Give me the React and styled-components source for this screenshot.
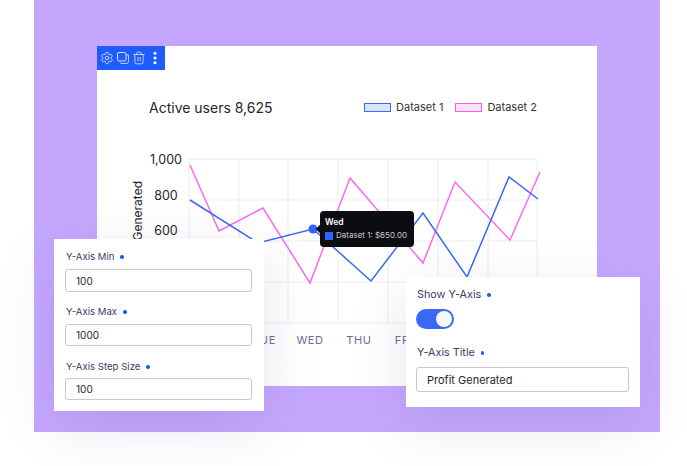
import React from 'react'
import styled, { createGlobalStyle } from 'styled-components'
import { Settings, Trash2, EllipsisVertical } from 'lucide-react'

const GlobalStyle = createGlobalStyle`
  html, body {
    margin: 0;
    background: #fff;
    font-family: Inter, "Liberation Sans", sans-serif;
  }
`

const Stage = styled.div`
  position: relative;
  width: 687px;
  height: 466px;
  overflow: hidden;
`

const Backdrop = styled.div`
  margin-left: 34px;
  width: 626px;
  height: 432px;
  padding: 46px 63px;
  box-sizing: border-box;
  background: #c5a8fe;
`

const Card = styled.div`
  width: 500px;
  height: 340px;
  background: #fff;
  display: flex;
  flex-direction: column;
`

const Toolbar = styled.div`
  width: 68px;
  height: 24px;
  box-sizing: border-box;
  padding-left: 3px;
  display: flex;
  align-items: center;
  gap: 3px;
  background: #1f5cff;
  color: #dbe6ff;
`

const MoreIcon = styled(EllipsisVertical)`
  margin-left: -2px;
  color: #fff;
`

const Header = styled.div`
  margin-top: 25px;
  height: 24px;
  padding: 0 60px 0 52px;
  display: flex;
  align-items: center;
  justify-content: space-between;
`

const Title = styled.div`
  font-size: 14px;
  color: #26262e;
`

const Legend = styled.div`
  display: flex;
  align-items: center;
  gap: 12px;
`

const LegendItem = styled.div`
  display: flex;
  align-items: center;
  gap: 5px;
  font-size: 11px;
  color: #33333b;
`

const Swatch = styled.span`
  width: 25px;
  height: 7px;
  border: 1px solid ${p => p.$color};
  background: ${p => p.$fill};
`

const Chart = styled.svg`
  display: block;
  margin-top: 21px;
  width: 500px;
  height: 230px;
`

const AxisValue = styled.text`
  font-size: 12.5px;
  fill: #26262e;
  text-anchor: middle;
`

const AxisTitle = styled.text`
  font-size: 12px;
  fill: #26262e;
  text-anchor: end;
`

const DayLabel = styled.text`
  font-size: 11px;
  letter-spacing: 0.6px;
  fill: #706d92;
  text-anchor: middle;
`

const Tooltip = styled.div`
  position: absolute;
  left: 320px;
  top: 211px;
  width: 94px;
  height: 36px;
  box-sizing: border-box;
  padding: 6px 5px;
  border-radius: 4px;
  background: #0c0d10;
  &::before {
    content: '';
    position: absolute;
    left: -3px;
    top: 15px;
    width: 6px;
    height: 6px;
    background: #0c0d10;
    transform: rotate(45deg);
  }
`

const TooltipTitle = styled.div`
  font-size: 8.5px;
  line-height: 11px;
  font-weight: 600;
  color: #fff;
`

const TooltipRow = styled.div`
  margin-top: 2px;
  display: flex;
  align-items: center;
  gap: 3px;
  font-size: 8px;
  line-height: 11px;
  white-space: nowrap;
  color: #c9c9cd;
`

const TooltipSwatch = styled.span`
  flex: none;
  width: 8px;
  height: 8px;
  background: #2f62ff;
`

const Panel = styled.div`
  position: absolute;
  left: ${p => p.$left}px;
  top: ${p => p.$top}px;
  width: ${p => p.$width}px;
  height: ${p => p.$height}px;
  box-sizing: border-box;
  padding: 12px ${p => p.$inset}px;
  background: #fff;
  box-shadow: 0 16px 60px rgba(50, 40, 110, 0.12);
`

const Label = styled.div`
  height: 12px;
  padding-left: 1px;
  display: flex;
  align-items: center;
  gap: 6px;
  font-size: ${p => p.$size}px;
  line-height: 12px;
  color: #3b3a68;
  margin-top: ${p => p.$gap || 0}px;
  &::after {
    content: '';
    width: 3.5px;
    height: 3.5px;
    border-radius: 50%;
    background: #1f5cff;
  }
`

const Input = styled.input`
  display: block;
  width: ${p => p.$width}px;
  height: ${p => p.$height}px;
  box-sizing: border-box;
  margin-top: ${p => p.$gap}px;
  padding: 0 10px;
  border: 1px solid #c8c8d0;
  border-radius: 3px;
  background: #fff;
  font-family: inherit;
  font-size: ${p => p.$size}px;
  color: #26262e;
  outline: none;
`

const Toggle = styled.div`
  width: 38px;
  height: 20px;
  margin-top: 8px;
  box-sizing: border-box;
  padding: 2px;
  border-radius: 10px;
  background: #3a68f5;
  display: flex;
  justify-content: flex-end;
`

const Knob = styled.span`
  width: 16px;
  height: 16px;
  border-radius: 50%;
  background: #f5f7ff;
`

const days = [['TUE', 264], ['WED', 310], ['THU', 359], ['FRI', 404]]
const gridX = [189, 239, 288, 338, 388, 438, 488, 537]
const gridY = [159, 200, 241, 282, 323]
const blue = '190,200 258,243 313,229 371,281 423,213 467,277 509,177 538,199'
const pink = '190,165 219,231 263,208 310,283 350,178 423,263 455,182 510,240 540,172'

const DuplicateIcon = () => (
  <svg width="12" height="12" viewBox="0 0 12 12" fill="none" stroke="currentColor" strokeWidth="1">
    <rect x="0.5" y="0.5" width="8.5" height="8.5" rx="1.5" />
    <path d="M11.5 3v6.5a2 2 0 0 1-2 2H4.5a2 2 0 0 1-1.6-.8" opacity="0.8" />
    <path d="M9 3h2.5" opacity="0.8" />
  </svg>
)

const App = () => (
  <Stage>
    <GlobalStyle />
    <Backdrop>
      <Card>
        <Toolbar>
          <Settings size={14} strokeWidth={1.4} />
          <DuplicateIcon />
          <Trash2 size={14} strokeWidth={1.4} />
          <MoreIcon size={16} strokeWidth={2.6} />
        </Toolbar>
        <Header>
          <Title>Active users 8,625</Title>
          <Legend>
            <LegendItem>
              <Swatch $color="#3a68f5" $fill="#dbe4fd" />
              Dataset 1
            </LegendItem>
            <LegendItem>
              <Swatch $color="#fb5cf0" $fill="#fee4fb" />
              Dataset 2
            </LegendItem>
          </Legend>
        </Header>
        <Chart viewBox="97 140 500 230">
          <g stroke="#ededf0" strokeWidth="1">
            {gridX.map(x => <line key={x} x1={x} x2={x} y1={159} y2={323} />)}
            {gridY.map(y => <line key={y} x1={189} x2={537} y1={y} y2={y} />)}
          </g>
          <AxisValue x="166" y="164">1,000</AxisValue>
          <AxisValue x="166" y="200">800</AxisValue>
          <AxisValue x="166" y="235">600</AxisValue>
          <AxisTitle transform="translate(142 181) rotate(-90)">Profit Generated</AxisTitle>
          {days.map(([d, x]) => <DayLabel key={d} x={x} y={344}>{d}</DayLabel>)}
          <polyline points={pink} fill="none" stroke="#fb6af0" strokeWidth="1.5" />
          <polyline points={blue} fill="none" stroke="#3a68f5" strokeWidth="1.5" />
          <circle cx="313" cy="229" r="4.5" fill="#2f62ff" />
        </Chart>
      </Card>
    </Backdrop>

    <Tooltip>
      <TooltipTitle>Wed</TooltipTitle>
      <TooltipRow>
        <TooltipSwatch />
        Dataset 1: $650.00
      </TooltipRow>
    </Tooltip>

    <Panel $left={54} $top={239} $width={210} $height={172} $inset={11}>
      <Label $size={9.6}>Y-Axis Min</Label>
      <Input readOnly value="100" $width={187} $height={23} $gap={6} $size={10} />
      <Label $size={9.6} $gap={14}>Y-Axis Max</Label>
      <Input readOnly value="1000" $width={187} $height={22} $gap={6} $size={10} />
      <Label $size={9.6} $gap={15}>Y-Axis Step Size</Label>
      <Input readOnly value="100" $width={187} $height={22} $gap={5} $size={10} />
    </Panel>

    <Panel $left={406} $top={277} $width={234} $height={130} $inset={10}>
      <Label $size={10.8}>Show Y-Axis</Label>
      <Toggle>
        <Knob />
      </Toggle>
      <Label $size={10.8} $gap={18}>Y-Axis Title</Label>
      <Input readOnly value="Profit Generated" $width={213} $height={25} $gap={8} $size={11} />
    </Panel>
  </Stage>
)

export default App
